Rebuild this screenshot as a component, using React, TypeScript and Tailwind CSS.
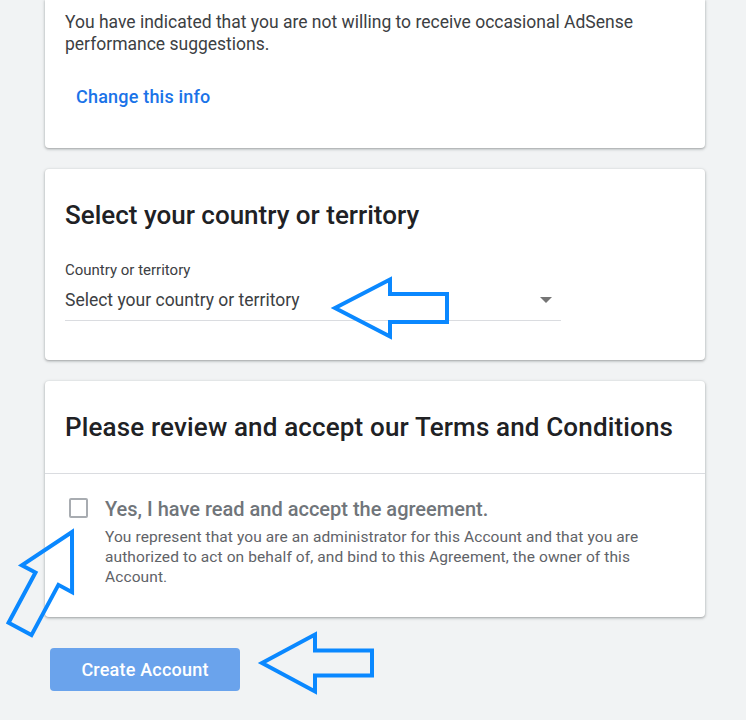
import React from 'react'

type ArrowProps = {
  x: number
  y: number
  angle?: number
  head?: number
  half?: number
  shaft?: number
  length?: number
}

// outlined callout arrow, drawn pointing left from its tip, then rotated
const Arrow = ({ x, y, angle = 0, head = 55, half = 28, shaft = 13.5, length = 112 }: ArrowProps) => {
  const pts = [
    [0, 0],
    [head, -half],
    [head, -shaft],
    [length, -shaft],
    [length, shaft],
    [head, shaft],
    [head, half],
  ]
    .map((p) => p.join(','))
    .join(' ')
  return (
    <polygon
      points={pts}
      transform={`translate(${x} ${y}) rotate(${angle})`}
      fill="none"
      stroke="#0a88ff"
      strokeWidth={4}
      strokeLinejoin="miter"
    />
  )
}

const Card = ({ children, className = '' }: { children: React.ReactNode; className?: string }) => (
  <div
    className={`bg-white w-[660px] ml-[45px] rounded shadow-[0_1px_2px_0_rgba(60,64,67,0.3),0_1px_3px_1px_rgba(60,64,67,0.15)] ${className}`}
  >
    {children}
  </div>
)

export default function App() {
  return (
    <div
      className="relative w-[746px] h-[720px] overflow-hidden bg-[#f1f3f4]"
      style={{ fontFamily: 'Roboto, "Liberation Sans", sans-serif' }}
    >
      {/* Contact preferences */}
      <Card className="rounded-t-none pt-[11px] pb-[31px] px-5">
        <p className="text-[17.5px] leading-[22px] text-[#3c4043]">
          You have indicated that you are not willing to receive occasional AdSense performance suggestions.
        </p>
        <button className="mt-[22px] px-[11px] py-[8px] text-[18px] leading-[24px] font-medium text-[#1a73e8] tracking-[0.2px] rounded">
          Change this info
        </button>
      </Card>

      {/* Country */}
      <Card className="mt-[21px] pt-[30px] pb-[39px] px-5">
        <h2 className="text-[26px] leading-[32px] font-medium text-[#202124]">
          Select your country or territory
        </h2>
        <div className="mt-[30px] w-[496px]">
          <div className="text-[15px] leading-[18px] text-[#3c4043]">Country or territory</div>
          <div className="mt-[9px] flex items-center justify-between border-b border-[#dadce0] pb-[8px]">
            <span className="text-[17.5px] leading-[24px] text-[#3c4043]">Select your country or territory</span>
            <span className="mr-[9px] w-0 h-0 border-l-[6px] border-r-[6px] border-t-[6px] border-l-transparent border-r-transparent border-t-[#757575]" />
          </div>
        </div>
      </Card>

      {/* Terms */}
      <Card className="mt-[21px]">
        <div className="pt-[30px] pb-[30px] px-5 border-b border-[#dadce0]">
          <h2 className="text-[26px] leading-[32px] font-medium text-[#202124] tracking-[0.15px]">
            Please review and accept our Terms and Conditions
          </h2>
        </div>
        <div className="flex pt-[23px] pb-[30px] pl-6 pr-10 gap-[17px]">
          <div className="mt-[1px] shrink-0 w-[19px] h-[20px] rounded-[2px] border-2 border-[#a8acb1] bg-white" />
          <div>
            <div className="text-[20px] leading-[24px] font-medium text-[#70757a]">
              Yes, I have read and accept the agreement.
            </div>
            <p className="mt-[6px] text-[15.5px] leading-[20px] text-[#5f6368] tracking-[0.1px]">
              You represent that you are an administrator for this Account and that you are authorized to act on
              behalf of, and bind to this Agreement, the owner of this Account.
            </p>
          </div>
        </div>
      </Card>

      <button className="mt-[31px] ml-[50px] w-[190px] h-[43px] rounded bg-[#6aa3ec] text-white text-[18px] font-medium tracking-[0.2px]">
        Create Account
      </button>

      {/* annotation arrows */}
      <svg className="absolute inset-0 pointer-events-none" width={746} height={720}>
        <Arrow x={335} y={308} head={55} half={28.5} shaft={14} length={112} />
        <Arrow x={262} y={663} head={53} half={28.5} shaft={12.5} length={110} />
        <Arrow x={72} y={532} angle={118.2} head={53} half={28.5} shaft={13} length={110} />
      </svg>
    </div>
  )
}
